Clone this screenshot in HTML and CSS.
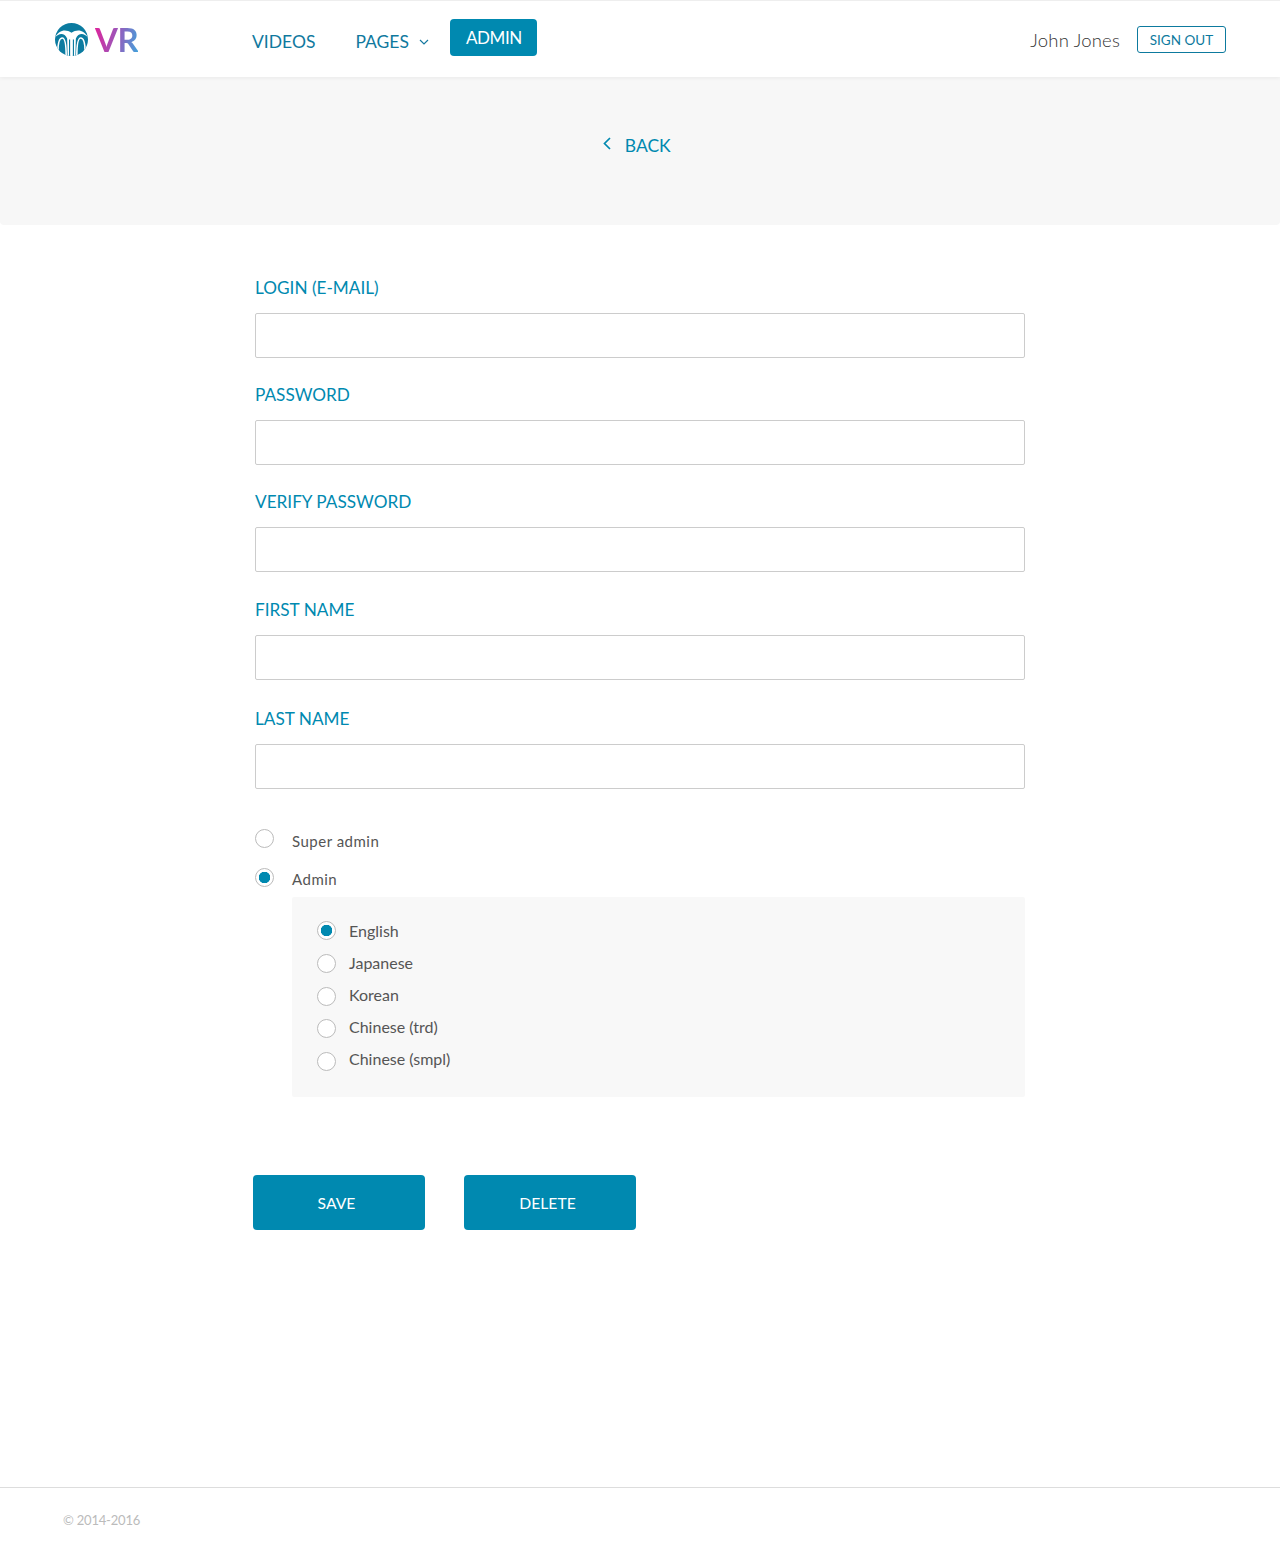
FILE: index.html
```html
<!doctype html>
<html>
<head>
	<title>VR Admin</title>
	<link rel="stylesheet" href="styles.css">
</head>
<body>
	<div class="header">
		<a class="logo">
			<svg width="33" height="33" viewBox="0 0 34 34">
				<clipPath id="logo-clip"><circle cx="17" cy="17" r="17"/></clipPath>
				<g clip-path="url(#logo-clip)">
					<rect width="34" height="34" fill="#0b7ba0"/>
					<path d="M0 15C4 7 11 6 17 10C23 6 30 7 34 15C30 10 24 10 21.500 16L21 34H13L12.500 16C10 10 4 10 0 15Z" fill="white"/>
					<path d="M15 17V34M19 17V34" stroke="#0b7ba0" stroke-width="1.200" fill="none"/>
					<path d="M3 30C3 20 5 15.500 7.500 15.500C10 15.500 11.500 20 11.500 34" stroke="white" stroke-width="1.600" fill="none"/>
					<path d="M31 30C31 20 29 15.500 26.500 15.500C24 15.500 22.500 20 22.500 34" stroke="white" stroke-width="1.600" fill="none"/>
				</g>
			</svg>
			<span class="logo-text">VR</span>
		</a>
		<div class="nav">
			<a class="nav-link nav-videos">VIDEOS</a>
			<a class="nav-link nav-pages">PAGES
				<svg width="10" height="6" viewBox="0 0 10 6"><path d="M1 1l4 4 4-4" fill="none" stroke="#1679a0" stroke-width="1.200"/></svg>
			</a>
			<a class="nav-active">ADMIN</a>
		</div>
		<div class="user">
			<span class="user-name">John Jones</span>
			<a class="btn-signout">SIGN OUT</a>
		</div>
	</div>

	<div class="back-bar">
		<a class="back-link">
			<svg width="8" height="13" viewBox="0 0 8 13"><path d="M7 1L1.500 6.500 7 12" fill="none" stroke="#0089b0" stroke-width="1.700"/></svg>
			BACK
		</a>
	</div>

	<div class="form">
		<div class="field">
			<label class="field-label">LOGIN (E-MAIL)</label>
			<input class="field-input" type="text">
		</div>
		<div class="field">
			<label class="field-label">PASSWORD</label>
			<input class="field-input" type="text">
		</div>
		<div class="field field-next-low">
			<label class="field-label">VERIFY PASSWORD</label>
			<input class="field-input" type="text">
		</div>
		<div class="field field-next-lower">
			<label class="field-label">FIRST NAME</label>
			<input class="field-input" type="text">
		</div>
		<div class="field">
			<label class="field-label">LAST NAME</label>
			<input class="field-input" type="text">
		</div>

		<div class="role">
			<span class="radio"></span>
			<span class="role-name">Super admin</span>
		</div>
		<div class="role">
			<span class="radio radio-on"></span>
			<span class="role-name">Admin</span>
		</div>

		<div class="lang-box">
			<div class="lang"><span class="radio radio-on"></span><span class="lang-name">English</span></div>
			<div class="lang"><span class="radio"></span><span class="lang-name">Japanese</span></div>
			<div class="lang"><span class="radio"></span><span class="lang-name">Korean</span></div>
			<div class="lang"><span class="radio"></span><span class="lang-name">Chinese (trd)</span></div>
			<div class="lang"><span class="radio"></span><span class="lang-name">Chinese (smpl)</span></div>
		</div>

		<div class="actions">
			<a class="btn-main">SAVE</a>
			<a class="btn-main">DELETE</a>
		</div>
	</div>

	<div class="footer">© 2014-2016</div>
</body>
</html>
```

FILE: styles.css
```css
*
{
	box-sizing:border-box;
}
body
{
	margin:0;
	height:1552px;
	background-color:white;
	font-family:"Lato","Open Sans",sans-serif;
	position:relative;
}
.header
{
	height:77px;
	border-top:1px solid #eeeeee;
	background-color:white;
	box-shadow:0 1px 4px rgba(0,0,0,0.06);
	display:flex;
	align-items:flex-start;
	padding:0 54px 0 55px;
	position:relative;
}
.logo
{
	width:197px;
	display:flex;
	align-items:center;
	gap:7px;
	margin-top:22px;
}
.logo-text
{
	font-size:33px;
	line-height:33px;
	font-weight:700;
	font-family:"Lato",sans-serif;
	letter-spacing:-0.5px;
	background:linear-gradient(100deg,#e0219a 0%,#9a58bb 50%,#3fa4dc 100%);
	-webkit-background-clip:text;
	background-clip:text;
	color:transparent;
}
.nav
{
	display:flex;
	align-items:flex-start;
	flex:1;
}
.nav-link
{
	font-size:17.500px;
	line-height:22px;
	color:#10799e;
	margin-top:30px;
}
.nav-videos
{
	margin-right:40px;
}
.nav-pages
{
	margin-right:21px;
}
.nav-pages svg
{
	margin-left:6px;
	vertical-align:3px;
}
.nav-active
{
	margin-top:18px;
	width:87px;
	height:37px;
	line-height:38px;
	text-align:center;
	background-color:#0089b0;
	color:white;
	font-size:17px;
	letter-spacing:-0.4px;
	border-radius:4px;
}
.user
{
	display:flex;
	align-items:flex-start;
}
.user-name
{
	font-size:18.500px;
	font-weight:300;
	letter-spacing:0.2px;
	line-height:22px;
	color:#333333;
	margin-top:28px;
	margin-right:17px;
}
.btn-signout
{
	margin-top:25px;
	width:89px;
	height:27px;
	line-height:27px;
	text-align:center;
	border:1px solid #0d7a9e;
	border-radius:3px;
	color:#0d7a9e;
	font-size:13.500px;
}
.back-bar
{
	height:148px;
	background-color:#f7f7f7;
	padding-top:58px;
	text-align:center;
	border-radius:0 0 4px 4px;
	padding-right:6px;
}
.back-link
{
	font-size:17.500px;
	line-height:22px;
	color:#0089b0;
}
.back-link svg
{
	margin-right:9px;
	vertical-align:2px;
}
.form
{
	width:770px;
	margin-left:255px;
	padding-top:50px;
}
.field
{
	margin-bottom:24px;
}
.field-next-low
{
	margin-bottom:25px;
}
.field-next-lower
{
	margin-bottom:26px;
}
.field-label
{
	display:block;
	font-size:17.200px;
	line-height:26px;
	margin-bottom:12px;
	color:#0089b0;
}
.field-input
{
	display:block;
	width:770px;
	height:45px;
	border:1px solid #cccccc;
	border-radius:2px;
	background-color:white;
}
.radio
{
	display:block;
	flex:none;
	width:19px;
	height:19px;
	border:1px solid #bbbbbb;
	border-radius:50%;
	background-color:white;
}
.radio-on
{
	background:radial-gradient(circle,#0089b0 0,#0089b0 5.500px,white 6px);
}
.role
{
	display:flex;
	gap:18px;
	height:39px;
	margin-top:40px;
}
.role + .role
{
	margin-top:0;
}
.role-name
{
	font-size:15px;
	letter-spacing:0.5px;
	line-height:20px;
	padding-top:2px;
	color:#555555;
}
.role + .role .role-name
{
	padding-top:1px;
}
.lang-box
{
	margin-left:37px;
	margin-top:-10px;
	height:200px;
	background-color:#f8f8f8;
	border-radius:2px;
	padding:24px 25px;
}
.lang
{
	display:flex;
	gap:13px;
	height:32px;
}
.lang:nth-child(2) .radio
{
	margin-top:1px;
}
.lang:nth-child(3) .radio,
.lang:nth-child(4) .radio
{
	margin-top:2px;
}
.lang:nth-child(5) .radio
{
	margin-top:3px;
}
.lang-name
{
	font-size:16px;
	line-height:20px;
	color:#555555;
}
.actions
{
	display:flex;
	gap:39px;
	margin-top:78px;
	margin-left:-2px;
}
.btn-main
{
	width:172px;
	height:55px;
	line-height:57px;
	text-align:center;
	background-color:#0089b0;
	color:white;
	font-size:15.700px;
	border-radius:4px;
	padding-right:5px;
}
.footer
{
	position:absolute;
	left:0;
	right:0;
	top:1487px;
	height:65px;
	border-top:1px solid #dddddd;
	padding:22px 0 0 63px;
	font-size:13px;
	letter-spacing:-0.2px;
	line-height:20px;
	color:#bbbbbb;
}
```
